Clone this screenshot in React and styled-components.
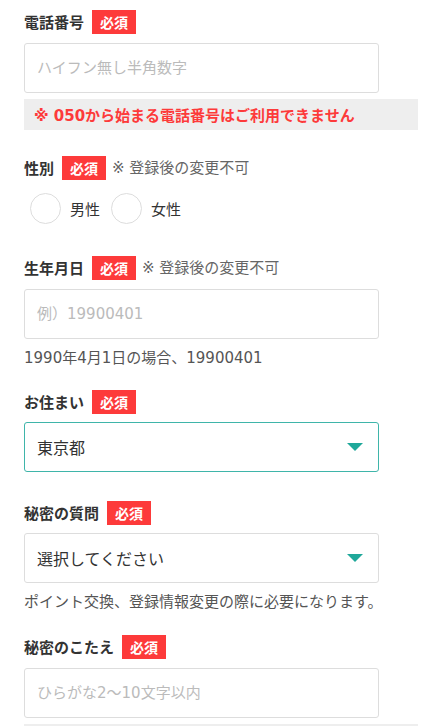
import React from "react";
import styled, { createGlobalStyle } from "styled-components";

const GlobalStyle = createGlobalStyle`
  html, body { margin: 0; padding: 0; background: #fff; }
  body { font-family: "DejaVu Sans", "Noto Sans CJK JP", sans-serif; color: #333; }
  * { box-sizing: border-box; }
`;

const Form = styled.form`
  width: 418px;
  padding: 10px 0 0 24px;
`;

const Field = styled.div`
  margin-bottom: ${(p) => p.$mb ?? 30}px;
`;

const LabelRow = styled.div`
  display: flex;
  align-items: center;
  height: 24px;
`;

const Label = styled.span`
  font-family: "Noto Sans CJK JP", sans-serif;
  font-size: 15px;
  line-height: 20px;
  font-weight: 700;
  color: #333;
  margin-right: 8px;
`;

const Badge = styled.span`
  display: inline-flex;
  align-items: center;
  justify-content: center;
  width: 44px;
  height: 24px;
  background: #fd3a3a;
  color: #fff;
  font-family: "Noto Sans CJK JP", sans-serif;
  font-size: 14px;
  font-weight: 700;
`;

const Note = styled.span`
  margin-left: 6px;
  font-size: 15px;
  line-height: 20px;
  color: #666;
`;

const Input = styled.input`
  display: block;
  width: 90%;
  height: 50px;
  margin-top: 9px;
  padding: 0 12px;
  border: 1px solid #ddd;
  border-radius: 3px;
  font-family: inherit;
  font-size: 15px;
  color: #333;
  outline: none;
  &::placeholder { color: #bbb; }
`;

const SelectBox = styled.div`
  position: relative;
  display: flex;
  align-items: center;
  width: 90%;
  height: 50px;
  margin-top: 8px;
  padding: 0 12px;
  border: 1px solid ${(p) => (p.$active ? "#3fb5aa" : "#ddd")};
  border-radius: 3px;
  font-size: 16px;
  color: #333;
`;

const Caret = styled.span`
  position: absolute;
  right: 15px;
  top: 50%;
  margin-top: -4px;
  width: 0;
  height: 0;
  border-left: 8px solid transparent;
  border-right: 8px solid transparent;
  border-top: 8px solid #1fa89a;
`;

const ErrorBox = styled.div`
  display: flex;
  align-items: center;
  height: 31px;
  margin-top: 6px;
  padding-left: 10px;
  background: #eee;
  font-size: 15px;
  font-weight: 700;
  color: #fd3a3a;
`;

const Help = styled.p`
  margin: 8px 0 0;
  font-size: 15px;
  line-height: 22px;
  color: #555;
`;

const RadioGroup = styled.div`
  display: flex;
  align-items: center;
  height: 31px;
  margin-top: 13px;
  padding-left: 6px;
`;

const RadioItem = styled.label`
  display: flex;
  align-items: center;
  margin-right: 11px;
  font-size: 15px;
  color: #333;
`;

const Circle = styled.span`
  width: 31px;
  height: 31px;
  margin-right: 9px;
  border: 1.5px solid #ddd;
  border-radius: 50%;
  background: #fff;
`;

const FieldLabel = ({ children, note }) => (
  <LabelRow>
    <Label>{children}</Label>
    <Badge>必須</Badge>
    {note && <Note>※ 登録後の変更不可</Note>}
  </LabelRow>
);

export default function App() {
  return (
    <>
      <GlobalStyle />
      <Form onSubmit={(e) => e.preventDefault()}>
        <Field $mb={26}>
          <FieldLabel>電話番号</FieldLabel>
          <Input placeholder="ハイフン無し半角数字" />
          <ErrorBox>※ 050から始まる電話番号はご利用できません</ErrorBox>
        </Field>

        <Field $mb={32}>
          <FieldLabel note>性別</FieldLabel>
          <RadioGroup>
            <RadioItem><Circle />男性</RadioItem>
            <RadioItem><Circle />女性</RadioItem>
          </RadioGroup>
        </Field>

        <Field $mb={21}>
          <FieldLabel note>生年月日</FieldLabel>
          <Input placeholder="例）19900401" />
          <Help>1990年4月1日の場合、19900401</Help>
        </Field>

        <Field $mb={29}>
          <FieldLabel>お住まい</FieldLabel>
          <SelectBox $active>東京都<Caret /></SelectBox>
        </Field>

        <Field $mb={22}>
          <FieldLabel>秘密の質問</FieldLabel>
          <SelectBox>選択してください<Caret /></SelectBox>
          <Help>ポイント交換、登録情報変更の際に必要になります。</Help>
        </Field>

        <Field>
          <FieldLabel>秘密のこたえ</FieldLabel>
          <Input placeholder="ひらがな2〜10文字以内" />
          <ErrorBox />
        </Field>
      </Form>
    </>
  );
}
